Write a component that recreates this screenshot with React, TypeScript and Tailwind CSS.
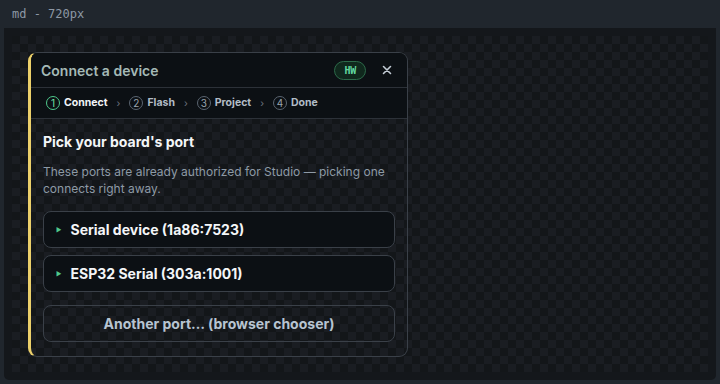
export default function App() {
  const steps = [
    { n: 1, label: "Connect", active: true },
    { n: 2, label: "Flash", active: false },
    { n: 3, label: "Project", active: false },
    { n: 4, label: "Done", active: false },
  ];

  const ports = ["Serial device (1a86:7523)", "ESP32 Serial (303a:1001)"];

  return (
    <div className="w-[720px] h-[384px] bg-[#20262d] flex flex-col px-1 pb-1 font-['Inter',sans-serif]">
      <div className="h-7 shrink-0 flex items-center pl-2 text-[12px] text-[#8d98a5] font-['DejaVu_Sans_Mono',monospace]">
        md - 720px
      </div>
      <div className="flex-1 rounded-b-[5px] bg-[#14171b] p-2 pt-2">
        <div className="h-full bg-[repeating-conic-gradient(#1a1d22_0_25%,#131619_0_50%)] bg-[length:16px_16px] bg-[position:0_0] pt-4 pl-4">
          <div className="w-[380px] rounded-[9px] border border-[#3a4048] border-l-[3px] border-l-[#ecd06a] flex flex-col overflow-hidden">
            <div className="h-[35px] bg-[#0c1014] border-b border-[#2c3138] flex items-center pl-[10px] pr-3">
              <div className="flex-1 text-[14px] font-semibold text-[#a4b9b6]">Connect a device</div>
              <span className="h-[19px] px-[9px] rounded-full border border-[#2d6a4a] bg-[#10281d] text-[#62d8a0] text-[10px] font-bold flex items-center font-['DejaVu_Sans_Mono',monospace] tracking-tight">
                HW
              </span>
              <button className="ml-[13px] w-4 h-4 flex items-center justify-center text-[#c3ccd5]">
                <svg width="10" height="10" viewBox="0 0 10 10" fill="none" stroke="currentColor" strokeWidth="1.6" strokeLinecap="round">
                  <path d="M1.5 1.5l7 7M8.5 1.5l-7 7" />
                </svg>
              </button>
            </div>
            <div className="h-[31px] bg-[#0c1014] border-b border-[#2c3138] flex items-center pl-[15px] gap-[9px]">
              {steps.map((s, i) => (
                <div key={s.n} className="flex items-center gap-[9px]">
                  <div className="flex items-center gap-[4px]">
                    <span
                      className={
                        s.active
                          ? "w-[14px] h-[14px] rounded-full border border-[#4fc98c] text-[#6fe0a8] text-[10px] flex items-center justify-center"
                          : "w-[14px] h-[14px] rounded-full border border-[#5a6470] text-[#9aa4ae] text-[10px] flex items-center justify-center"
                      }
                    >
                      {s.n}
                    </span>
                    <span className={s.active ? "text-[10.5px] font-bold text-[#f2f5f7]" : "text-[10.5px] font-bold text-[#b2bcc6]"}>
                      {s.label}
                    </span>
                  </div>
                  {i < steps.length - 1 && <span className="text-[10px] text-[#6c7580]">›</span>}
                </div>
              ))}
            </div>
            <div className="px-3 pt-[14px] pb-[14px] flex flex-col">
              <h2 className="text-[14px] font-bold text-[#f4f6f8] leading-[18px]">Pick your board's port</h2>
              <p className="mt-[12px] text-[12px] leading-[17px] text-[#8e9aa6]">
                These ports are already authorized for Studio — picking one connects right away.
              </p>
              <div className="mt-[14px] flex flex-col gap-[7px]">
                {ports.map((p) => (
                  <button
                    key={p}
                    className="h-[37px] rounded-[8px] border border-[#3a4048] bg-[#0c1014] flex items-center pl-[12px] gap-[9px] text-left"
                  >
                    <span className="text-[#4fc98c] text-[6px]">▶</span>
                    <span className="text-[14px] font-bold text-[#f4f6f8]">{p}</span>
                  </button>
                ))}
              </div>
              <button className="mt-[13px] h-[37px] rounded-[8px] border border-[#3a4048] flex items-center justify-center text-[14px] font-bold text-[#b7c4d1]">
                Another port… (browser chooser)
              </button>
            </div>
          </div>
        </div>
      </div>
    </div>
  );
}
